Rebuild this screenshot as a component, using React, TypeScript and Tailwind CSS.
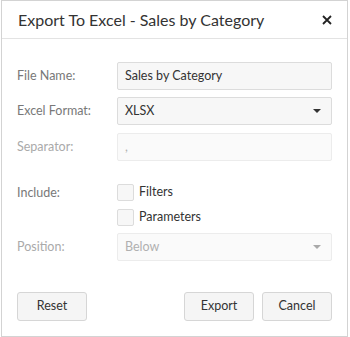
import React from 'react';

const font = { fontFamily: 'Lato, "Noto Sans", sans-serif' };

function Caret({ disabled }: { disabled?: boolean }) {
  return (
    <svg width="8" height="4" viewBox="0 0 8 4" className={disabled ? 'text-[#a9a9a9]' : 'text-[#333]'}>
      <path d="M0 0h8L4 4z" fill="currentColor" />
    </svg>
  );
}

function Row({ label, disabled, children, className = '' }: { label: string; disabled?: boolean; children: React.ReactNode; className?: string }) {
  return (
    <div className={`flex items-center ${className}`}>
      <div className={`w-[100px] shrink-0 text-[12.5px] ${disabled ? 'text-[#aaaaaa]' : 'text-[#787878]'}`}>{label}</div>
      <div className="flex-1">{children}</div>
    </div>
  );
}

function Box({ children, disabled, caret }: { children: React.ReactNode; disabled?: boolean; caret?: boolean }) {
  return (
    <div
      className={`flex h-[28px] items-center justify-between rounded-[2px] border px-[7px] text-[12.5px] ${
        disabled ? 'border-[#ececec] bg-[#fafafa] text-[#b0b0b0]' : 'border-[#dcdcdc] bg-[#f7f7f7] text-[#333]'
      }`}
    >
      <span>{children}</span>
      {caret && <span className="mr-[3px] flex"><Caret disabled={disabled} /></span>}
    </div>
  );
}

function Check({ label }: { label: string }) {
  return (
    <div className="flex h-[17px] items-center gap-[5px] leading-none">
      <div className="h-[17px] w-[17px] rounded-[2px] border border-[#dcdcdc] bg-[#f7f7f7]" />
      <span className="text-[12.5px] text-[#333]">{label}</span>
    </div>
  );
}

function Btn({ children }: { children: React.ReactNode }) {
  return (
    <button className="h-[29px] w-[70px] rounded-[3px] border border-[#d6d6d6] bg-[#f5f5f5] text-[12.5px] text-[#333]">
      {children}
    </button>
  );
}

export default function App() {
  return (
    <div className="h-[337px] w-[350px] bg-white pl-[1px]" style={font}>
      <div className="h-[337px] w-[347px] border border-[#d3d3d3] bg-white">
        <div className="flex h-[38px] items-center justify-between border-b border-[#e3e3e3] pl-[16px] pr-[15px]">
          <span className="text-[16px] text-[#333]">Export To Excel - Sales by Category</span>
          <svg width="10" height="10" viewBox="0 0 10 10" className="text-[#222]">
            <path d="M1 1l8 8M9 1l-8 8" stroke="currentColor" strokeWidth="1.8" />
          </svg>
        </div>
        <div className="px-[15px] pt-[23px]">
          <Row label="File Name:">
            <Box>Sales by Category</Box>
          </Row>
          <Row label="Excel Format:" className="mt-[7px]">
            <Box caret>XLSX</Box>
          </Row>
          <Row label="Separator:" disabled className="mt-[8px]">
            <Box disabled>,</Box>
          </Row>
          <div className="mt-[23px] flex">
            <div className="w-[100px] shrink-0 text-[12.5px] leading-[17px] text-[#787878]">Include:</div>
            <div className="flex flex-col gap-[8px]">
              <Check label="Filters" />
              <Check label="Parameters" />
            </div>
          </div>
          <Row label="Position:" disabled className="mt-[7px]">
            <Box disabled caret>Below</Box>
          </Row>
          <div className="mt-[31px] flex items-center">
            <Btn>Reset</Btn>
            <div className="flex-1" />
            <Btn>Export</Btn>
            <div className="w-[8px]" />
            <Btn>Cancel</Btn>
          </div>
        </div>
      </div>
    </div>
  );
}
